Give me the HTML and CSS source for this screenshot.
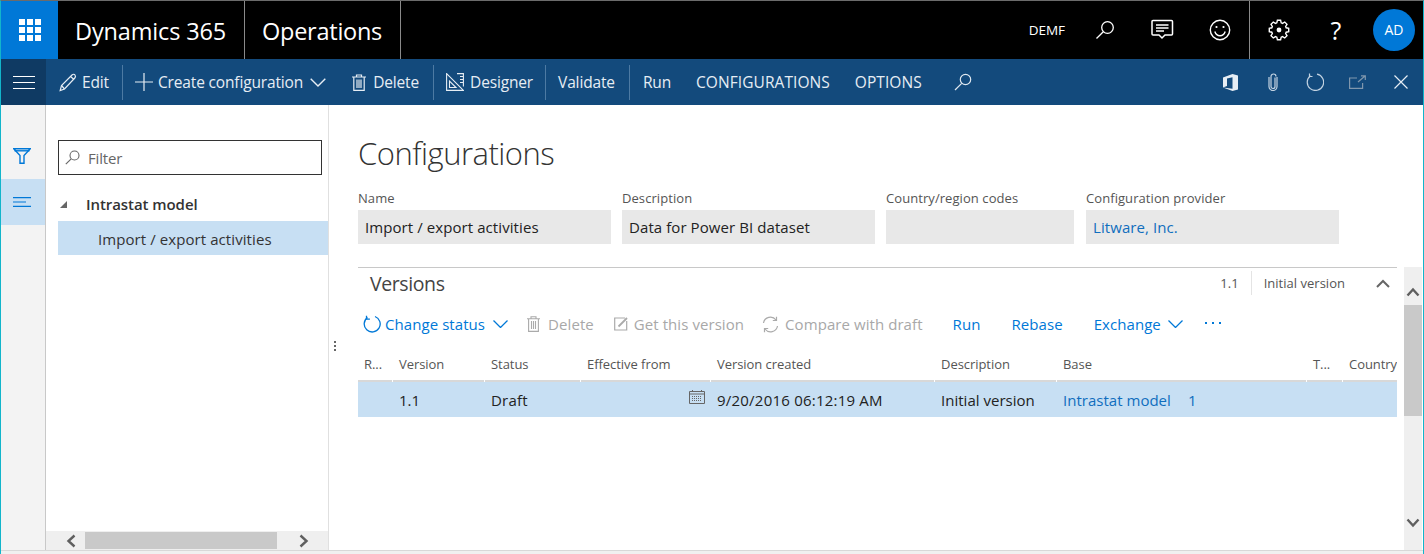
FILE: index.html
```html
<!DOCTYPE html>
<html lang="en">
<head>
    <meta charset="UTF-8">
    <title>Configurations - Dynamics 365 Operations</title>
    <link rel="stylesheet" href="styles.css">
</head>
<body>
<div class="app">
    <header class="topbar">
        <div class="waffle">
            <svg width="22" height="22" viewBox="0 0 22 22" fill="#fff">
                <rect x="0" y="0" width="6" height="6"/><rect x="8" y="0" width="6" height="6"/><rect x="16" y="0" width="6" height="6"/>
                <rect x="0" y="8" width="6" height="6"/><rect x="8" y="8" width="6" height="6"/><rect x="16" y="8" width="6" height="6"/>
                <rect x="0" y="16" width="6" height="6"/><rect x="8" y="16" width="6" height="6"/><rect x="16" y="16" width="6" height="6"/>
            </svg>
        </div>
        <div class="brand brand-d365">Dynamics 365</div>
        <div class="brand brand-ops">Operations</div>
        <div class="top-right">
            <span class="company">DEMF</span>
            <svg class="top-search" width="20" height="20" viewBox="0 0 20 20" fill="none" stroke="#fff" stroke-width="1.3"><circle cx="12.5" cy="7.5" r="5.8"/><path d="M8.3 11.7 1.5 18.5"/></svg>
            <svg class="top-chat" width="24" height="22" viewBox="0 0 24 22" fill="none" stroke="#fff" stroke-width="1.5"><path d="M3 1.500h18.500a1 1 0 0 1 1 1v12.500a1 1 0 0 1-1 1H15l-3 3-3-3H3a1 1 0 0 1-1-1V2.500a1 1 0 0 1 1-1z"/><path d="M6 6h12.500M6 9h12.500M6 12h8"/></svg>
            <svg class="top-smile" width="22" height="22" viewBox="0 0 22 22" fill="none" stroke="#fff" stroke-width="1.4"><circle cx="11" cy="11" r="9.700"/><path d="M5.800 12.500c1 3 3 4.200 5.200 4.200s4.200-1.200 5.200-4.200"/><circle cx="7.500" cy="8" r="1.100" fill="#fff" stroke="none"/><circle cx="14.500" cy="8" r="1.100" fill="#fff" stroke="none"/></svg>
            <span class="top-sep"></span>
            <svg class="top-gear" width="22" height="22" viewBox="-11 -11 22 22" fill="none" stroke="#fff" stroke-width="1.400"><polygon points="-2.2,-7.2 -1.6,-9.7 1.6,-9.7 2.2,-7.2 3.54,-6.65 5.73,-7.99 7.99,-5.73 6.65,-3.54 7.2,-2.2 9.7,-1.6 9.7,1.6 7.2,2.2 6.65,3.54 7.99,5.73 5.73,7.99 3.54,6.65 2.2,7.2 1.6,9.7 -1.6,9.7 -2.2,7.2 -3.54,6.65 -5.73,7.99 -7.99,5.73 -6.65,3.54 -7.2,2.2 -9.7,1.6 -9.7,-1.6 -7.2,-2.2 -6.65,-3.54 -7.99,-5.73 -5.73,-7.99 -3.54,-6.65"/><circle cx="0" cy="0" r="2.400" fill="#fff" stroke="none"/></svg>
            <span class="top-help">?</span>
            <span class="avatar">AD</span>
        </div>
    </header>

    <nav class="cmdbar">
        <div class="hamburger"><span></span><span></span><span></span></div>
        <div class="cmd cmd-edit">
            <svg width="18" height="19" viewBox="0 0 18 19" fill="none" stroke="#e6edf4" stroke-width="1.200"><path d="M1.200 17.500l1.300-5L13 2c1-1 2.300-1 3 0s.7 2-.2 3L5.500 16z"/><path d="M2.500 12.500l3 3.500M11.500 3.500l3.500 3"/></svg>
            <span>Edit</span>
        </div>
        <i class="cmd-sep"></i>
        <div class="cmd cmd-create">
            <svg width="18" height="18" viewBox="0 0 18 18" stroke="#e6edf4" stroke-width="1.200"><path d="M9 0v18M0 9h18"/></svg>
            <span>Create configuration</span>
            <svg class="cmd-chevron" width="16" height="9" viewBox="0 0 16 9" fill="none" stroke="#e6edf4" stroke-width="1.400"><path d="M.7.700 8 8l7.300-7.300"/></svg>
        </div>
        <div class="cmd cmd-delete">
            <svg width="14" height="17" viewBox="0 0 14 17" fill="none" stroke="#e6edf4" stroke-width="1.200"><path d="M0 3h14M4.500 3V1h5v2M1.800 3v13.400h10.400V3"/><path d="M5 5.500v8.500M7 5.500v8.500M9 5.500v8.500"/></svg>
            <span>Delete</span>
        </div>
        <i class="cmd-sep"></i>
        <div class="cmd cmd-designer">
            <svg width="18" height="18" viewBox="0 0 18 18" fill="none" stroke="#e6edf4" stroke-width="1.100"><path d="M.6.600v16.800h16.800z"/><path d="M3.500 8v6.500H10z"/><path d="M11 .6h6.400v13M14 3.500h3.400M14 6.500h3.400M14 9.500h3.400"/></svg>
            <span>Designer</span>
        </div>
        <i class="cmd-sep"></i>
        <div class="cmd cmd-validate"><span>Validate</span></div>
        <i class="cmd-sep"></i>
        <div class="cmd cmd-run"><span>Run</span></div>
        <div class="cmd cmd-tab"><span>CONFIGURATIONS</span></div>
        <div class="cmd cmd-tab"><span>OPTIONS</span></div>
        <svg class="cmd-search" width="18" height="18" viewBox="0 0 18 18" fill="none" stroke="#dfe8f0" stroke-width="1.200"><circle cx="11.500" cy="6.500" r="5.200"/><path d="M7.700 10.300 1 17"/></svg>
        <div class="cmd-right">
            <svg width="15" height="17" viewBox="0 0 15 17" fill="#e6edf4"><path d="M0 3.500 9.500 0 15 1.500v14L9.500 17 0 13.500l9.500 1.200V3.300L4 4.500v7.500L0 13.500z"/></svg>
            <svg class="r-clip" width="10" height="18" viewBox="0 0 10 18" fill="none" stroke="#c3d3e2" stroke-width="1.200"><path d="M7 4.500v9a2 2 0 0 1-4 0V3.500a2.500 2.500 0 0 1 5 0"/><path d="M9 4v9.500a4 4 0 0 1-8 0V4"/></svg>
            <svg class="r-refresh" width="18" height="18" viewBox="0 0 18 18" fill="none" stroke="#c3d3e2" stroke-width="1.200"><path d="M11 1.200a8.200 8.200 0 1 1-6.500 1.500"/><path d="M3.500 .5v3h3"/></svg>
            <svg class="r-pop" width="17" height="14" viewBox="0 0 17 14" fill="none" stroke="#8097ad" stroke-width="1.200"><path d="M8 3H.6v10.400h13V8"/><path d="M9 7l7-6M12 .8h4.300V5"/></svg>
            <svg class="r-close" width="14" height="14" viewBox="0 0 14 14" stroke="#e6edf4" stroke-width="1.200"><path d="M.5.500l13 13M13.500.500l-13 13"/></svg>
        </div>
    </nav>

    <div class="body">
        <aside class="rail">
            <div class="rail-btn">
                <svg width="18" height="16" viewBox="0 0 18 16" fill="none" stroke="#0078d7" stroke-width="1.400"><path d="M.8.800h16.400L11 7.500v7.700H7V7.500z"/><path d="M1.500 2.800h15"/></svg>
            </div>
            <div class="rail-btn rail-btn-on">
                <svg width="18" height="10" viewBox="0 0 18 10" stroke="#0078d7" stroke-width="1.200"><path d="M0 .6h18M0 5h13M0 9.400h18"/></svg>
            </div>
        </aside>

        <section class="tree-pane">
            <div class="filter">
                <svg width="15" height="15" viewBox="0 0 15 15" fill="none" stroke="#666" stroke-width="1.100"><circle cx="9.500" cy="5.500" r="4.500"/><path d="M6.200 8.800.8 14.200"/></svg>
                <span>Filter</span>
            </div>
            <div class="tree-root"><i class="tree-arrow"></i><span>Intrastat model</span></div>
            <div class="tree-child">Import / export activities</div>
            <div class="hscroll">
                <svg width="12" height="14" viewBox="0 0 12 14" fill="none" stroke="#5f5f5f" stroke-width="2.400"><path d="M9.500 1.500 3.500 7l6 5.500"/></svg>
                <div class="hscroll-track"><div class="hscroll-thumb"></div></div>
                <svg width="12" height="14" viewBox="0 0 12 14" fill="none" stroke="#5f5f5f" stroke-width="2.400"><path d="M2.500 1.500 8.500 7l-6 5.500"/></svg>
            </div>
        </section>

        <main class="content">
            <div class="splitter"><i></i><i></i><i></i></div>
            <h1 class="page-title">Configurations</h1>
            <div class="fields">
                <div class="field f-name"><label>Name</label><div class="value">Import / export activities</div></div>
                <div class="field f-desc"><label>Description</label><div class="value">Data for Power BI dataset</div></div>
                <div class="field f-country"><label>Country/region codes</label><div class="value"></div></div>
                <div class="field f-prov"><label>Configuration provider</label><div class="value link">Litware, Inc.</div></div>
            </div>

            <div class="versions-wrap">
                <div class="versions">
                    <div class="versions-head">
                        <h2>Versions</h2>
                        <span class="vh-num">1.1</span>
                        <span class="vh-desc">Initial version</span>
                        <svg class="vh-up" width="14" height="9" viewBox="0 0 14 9" fill="none" stroke="#666" stroke-width="2"><path d="M1 8l6-6 6 6"/></svg>
                    </div>
                    <div class="toolbar">
                        <div class="tool t-status">
                            <svg width="18" height="18" viewBox="0 0 18 18" fill="none" stroke="#0078d7" stroke-width="1.300"><path d="M12 1.500a8 8 0 1 1-7.500 1"/><path d="M3.500 .800v3.400h3.400"/></svg>
                            <span>Change status</span>
                            <svg class="t-chevron" width="15" height="8" viewBox="0 0 15 8" fill="none" stroke="#0078d7" stroke-width="1.300"><path d="M.5.500l7 7 7-7"/></svg>
                        </div>
                        <div class="tool t-delete off">
                            <svg width="13" height="16" viewBox="0 0 13 16" fill="none" stroke="#aaa" stroke-width="1.100"><path d="M0 2.800h13M4 2.800V.8h5v2M1.600 2.800v12.600h9.800V2.800"/><path d="M4.500 5v8M6.500 5v8M8.500 5v8"/></svg>
                            <span>Delete</span>
                        </div>
                        <div class="tool t-get off">
                            <svg width="14" height="14" viewBox="0 0 14 14" fill="none" stroke="#aaa" stroke-width="1.200"><path d="M11 1H.7v12h12V4"/><path d="M4.500 9.500 13 1" stroke-width="1.800"/></svg>
                            <span>Get this version</span>
                        </div>
                        <div class="tool t-compare off">
                            <svg width="17" height="17" viewBox="0 0 17 17" fill="none" stroke="#aaa" stroke-width="1.200"><path d="M1.500 7A7 7 0 0 1 14 4M15.500 10A7 7 0 0 1 3 13"/><path d="M14.500 .8V4.500h-3.700M2.500 16.200V12.500h3.700"/></svg>
                            <span>Compare with draft</span>
                        </div>
                        <div class="tool t-link t-run"><span>Run</span></div>
                        <div class="tool t-link"><span>Rebase</span></div>
                        <div class="tool t-link t-exchange">
                            <span>Exchange</span>
                            <svg width="15" height="8" viewBox="0 0 15 8" fill="none" stroke="#0078d7" stroke-width="1.300"><path d="M.5.500l7 7 7-7"/></svg>
                        </div>
                        <div class="tool t-more"><i></i><i></i><i></i></div>
                    </div>
                    <div class="grid grid-head">
                        <div>R...</div><div>Version</div><div>Status</div><div>Effective from</div><div>Version created</div><div>Description</div><div>Base</div><div>T...</div><div class="cut">Country</div>
                    </div>
                    <div class="grid grid-row">
                        <div></div><div>1.1</div><div class="cell-status">Draft</div>
                        <div class="cell-date">
                            <svg width="16" height="14" viewBox="0 0 16 14" fill="none" stroke="#666" stroke-width="1"><path d="M.5 1.500h15v12H.5z"/><path d="M.5 4h15"/><path d="M3.500 0v2M12.500 0v2"/><path d="M3 6.500h10M3 8.500h10M3 10.500h10" stroke-dasharray="1 1"/></svg>
                        </div>
                        <div class="cell-created">9/20/2016 06:12:19 AM</div><div>Initial version</div>
                        <div class="link"><span class="base-name">Intrastat model</span>1</div>
                        <div></div><div></div>
                    </div>
                </div>
                <div class="vscroll">
                    <svg class="v-up" width="14" height="12" viewBox="0 0 14 12" fill="none" stroke="#5f5f5f" stroke-width="2.400"><path d="M1.500 9.500 7 3.500l5.500 6"/></svg>
                    <div class="vscroll-thumb"></div>
                    <svg class="v-down" width="14" height="12" viewBox="0 0 14 12" fill="none" stroke="#5f5f5f" stroke-width="2.400"><path d="M1.500 2.500 7 8.500l5.500-6"/></svg>
                </div>
            </div>
        </main>
    </div>
    <div class="statusbar"></div>
</div>
</body>
</html>
```

FILE: styles.css
```css
* {
    box-sizing: border-box;
}
html, body {
    margin: 0;
    height: 100%;
    overflow: hidden;
}
body {
    font-family: "Open Sans", "Noto Sans", Arial, sans-serif;
    font-size: 15px;
    color: #222;
    background-color: white;
}
svg {
    flex: none;
}
.app {
    width: 1424px;
    height: 554px;
    display: flex;
    flex-direction: column;
    border-top: 1px solid #6b6b6b;
    border-left: 1px solid #12b5cb;
    border-right: 1px solid #12b5cb;
}

/* top black bar */
.topbar {
    height: 58px;
    flex: none;
    display: flex;
    background-color: black;
    color: white;
}
.waffle {
    width: 57px;
    background-color: #0078d7;
    display: flex;
    align-items: center;
    justify-content: center;
}
.brand {
    font-size: 23.5px;
    line-height: 60px;
    border-right: 1px solid #8a8a8a;
}
.brand-d365 {
    width: 187px;
    padding-left: 17px;
    letter-spacing: -0.15px;
}
.brand-ops {
    width: 156px;
    padding-left: 17px;
    letter-spacing: -0.25px;
}
.top-right {
    margin-left: auto;
    display: flex;
    align-items: center;
}
.company {
    font-size: 13.5px;
    letter-spacing: -0.05px;
    margin-right: 30px;
}
.top-search {
    margin-right: 35px;
}
.top-chat {
    margin-right: 35px;
}
.top-smile {
    margin-right: 18px;
}
.top-sep {
    width: 1px;
    height: 58px;
    background-color: #8a8a8a;
    margin-right: 18px;
}
.top-gear {
    margin-right: 39px;
}
.top-help {
    font-size: 25px;
    width: 14px;
    margin-right: 30px;
    text-align: center;
}
.avatar {
    width: 42px;
    height: 42px;
    border-radius: 50%;
    background-color: #0078d7;
    font-size: 14px;
    line-height: 42px;
    text-align: center;
    margin-right: 8px;
}

/* command bar */
.cmdbar {
    height: 46px;
    flex: none;
    display: flex;
    align-items: center;
    background-color: #134a7c;
    color: #e6edf4;
    font-size: 15.5px;
    letter-spacing: -0.15px;
}
.hamburger {
    width: 45px;
    height: 46px;
    background-color: #0f3a63;
    display: flex;
    flex-direction: column;
    justify-content: center;
    align-items: center;
    gap: 5px;
}
.hamburger span {
    width: 22px;
    height: 1px;
    background-color: white;
}
.cmd {
    display: flex;
    align-items: center;
    white-space: nowrap;
}
.cmd-sep {
    width: 1px;
    height: 35px;
    background-color: #4d7aa3;
}
.cmd-edit {
    margin-left: 13px;
    gap: 5px;
    margin-right: 13px;
}
.cmd-create {
    margin-left: 12px;
    gap: 5px;
}
.cmd-chevron {
    margin-left: 2px;
}
.cmd-delete {
    margin-left: 26px;
    gap: 7px;
    margin-right: 14px;
}
.cmd-designer {
    margin-left: 12px;
    gap: 6px;
    margin-right: 12px;
}
.cmd-validate {
    margin-left: 12px;
    margin-right: 14px;
}
.cmd-run {
    margin-left: 13px;
}
.cmd-tab {
    margin-left: 25px;
    letter-spacing: 0.07px;
}
.cmd-search {
    margin-left: 32px;
}
.cmd-right {
    margin-left: auto;
    display: flex;
    align-items: center;
    margin-right: 15px;
}
.r-clip {
    margin-left: 30px;
}
.r-refresh {
    margin-left: 28px;
}
.r-pop {
    margin-left: 25px;
}
.r-close {
    margin-left: 28px;
}

/* main area */
.body {
    flex: 1;
    display: flex;
    min-height: 0;
}
.rail {
    width: 45px;
    flex: none;
    background-color: #f3f3f3;
    border-right: 1px solid #c8c8c8;
    padding-top: 28px;
}
.rail-btn {
    height: 46px;
    display: flex;
    align-items: center;
    justify-content: center;
    padding-right: 2px;
}
.rail-btn-on {
    background-color: #c7dff3;
}
.tree-pane {
    width: 283px;
    flex: none;
    border-right: 1px solid #e0e0e0;
    display: flex;
    flex-direction: column;
    padding-top: 35px;
}
.filter {
    width: 264px;
    height: 35px;
    margin-left: 12px;
    border: 1px solid #333;
    display: flex;
    align-items: center;
    gap: 8px;
    padding-left: 6px;
    color: #666;
    letter-spacing: -0.15px;
}
.tree-root {
    margin-top: 12px;
    height: 34px;
    display: flex;
    align-items: center;
    font-weight: 600;
    color: #333;
    letter-spacing: -0.07px;
    padding-left: 14px;
}
.tree-arrow {
    width: 0;
    height: 0;
    border-left: 7px solid transparent;
    border-bottom: 7px solid #666;
    margin-right: 19px;
}
.tree-child {
    margin-left: 12px;
    height: 34px;
    line-height: 37px;
    padding-left: 40px;
    background-color: #c7dff3;
    color: #333;
    letter-spacing: 0.08px;
}
.hscroll {
    margin-top: auto;
    height: 19px;
    background-color: #efefef;
    display: flex;
    align-items: center;
    padding: 0 18px 0 19px;
    gap: 8px;
}
.hscroll-track {
    flex: 1;
    min-width: 0;
    height: 100%;
    padding: 1px 0;
}
.hscroll-thumb {
    width: 192px;
    height: 100%;
    background-color: #c9c9c9;
}
.content {
    flex: 1;
    position: relative;
    padding: 29px 26px 0 29px;
    display: flex;
    flex-direction: column;
    min-width: 0;
}
.splitter {
    position: absolute;
    left: 5px;
    top: 236px;
    display: flex;
    flex-direction: column;
    gap: 2px;
}
.splitter i {
    width: 2px;
    height: 2px;
    background-color: #666;
}
.page-title {
    margin: 0;
    font-size: 31px;
    font-weight: 300;
    line-height: 38px;
    color: #333;
    letter-spacing: -0.5px;
}
.fields {
    display: flex;
    margin-top: 17px;
}
.field label {
    display: block;
    font-size: 13px;
    line-height: 18px;
    color: #555;
    letter-spacing: 0.07px;
    margin-bottom: 3px;
}
.value {
    height: 34px;
    line-height: 34px;
    background-color: #e8e8e8;
    padding-left: 7px;
    color: #222;
    letter-spacing: 0.08px;
    white-space: nowrap;
}
.f-name {
    width: 253px;
    margin-right: 11px;
}
.f-desc {
    width: 253px;
    margin-right: 11px;
}
.f-country {
    width: 188px;
    margin-right: 12px;
}
.f-prov {
    width: 253px;
}
.link {
    color: #106ebe;
}

/* versions section */
.versions-wrap {
    flex: 1;
    display: flex;
    margin-top: 23px;
    min-height: 0;
    margin-right: -25px;
}
.versions {
    width: 1039px;
    border-top: 1px solid #c8c8c8;
}
.versions-head {
    height: 30px;
    display: flex;
    align-items: center;
}
.versions-head h2 {
    margin: 0 auto 0 12px;
    font-size: 19.5px;
    font-weight: 400;
    color: #444;
    letter-spacing: -0.4px;
}
.vh-num {
    font-size: 13px;
    color: #555;
    padding-right: 12px;
    line-height: 24px;
    border-right: 1px solid #e4e4e4;
}
.vh-desc {
    font-size: 13px;
    color: #555;
    letter-spacing: 0.02px;
    margin-left: 12px;
    margin-right: 31px;
}
.vh-up {
    margin-right: 7px;
}
.toolbar {
    height: 52px;
    display: flex;
    align-items: center;
    color: #0078d7;
    letter-spacing: 0.07px;
}
.tool {
    display: flex;
    align-items: center;
    white-space: nowrap;
}
.off {
    color: #a8a8a8;
}
.t-status {
    margin-left: 5px;
    gap: 4px;
}
.t-chevron {
    margin-left: 4px;
}
.t-delete {
    margin-left: 19px;
    gap: 8px;
}
.t-get {
    margin-left: 20px;
    gap: 6px;
}
.t-compare {
    margin-left: 18px;
    gap: 6px;
}
.t-link {
    margin-left: 31px;
}
.t-run {
    margin-left: 30px;
}
.t-exchange {
    gap: 7px;
}
.t-more {
    margin-left: 22px;
    gap: 5px;
    margin-top: -3px;
}
.t-more i {
    width: 2px;
    height: 2px;
    background-color: #0078d7;
}
.grid {
    display: grid;
    grid-template-columns: 35px 92px 96px 130px 224px 122px 250px 36px 54px;
}
.grid-head {
    height: 32px;
    font-size: 13px;
    color: #555;
    letter-spacing: -0.05px;
}
.grid-head div {
    line-height: 28px;
    padding-left: 6px;
    margin-right: 1px;
    border-bottom: 2px solid #d8d8d8;
    white-space: nowrap;
    overflow: hidden;
}
.grid-head .cut {
    margin-right: 0;
}
.grid-row {
    height: 35px;
    background-color: #c7dff3;
    line-height: 36px;
    letter-spacing: 0.02px;
}
.grid-row > div {
    padding-left: 6px;
    white-space: nowrap;
}
.grid-row .cell-status {
    letter-spacing: 0.2px;
}
.grid-row .cell-created {
    letter-spacing: 0.22px;
}
.grid-row .cell-date {
    display: flex;
    justify-content: flex-end;
    align-items: flex-start;
    padding-top: 8px;
    padding-right: 6px;
}
.base-name {
    margin-right: 17px;
}
.vscroll {
    width: 18px;
    margin-left: 7px;
    background-color: #efefef;
    display: flex;
    flex-direction: column;
    align-items: center;
    padding-top: 19px;
}
.vscroll-thumb {
    width: 18px;
    height: 111px;
    background-color: #c9c9c9;
    margin-top: 7px;
    flex: none;
}
.v-down {
    margin-top: 101px;
}
.statusbar {
    height: 4px;
    flex: none;
    background-color: #f0f0f0;
    border-top: 1px solid #d8d8d8;
}
```
